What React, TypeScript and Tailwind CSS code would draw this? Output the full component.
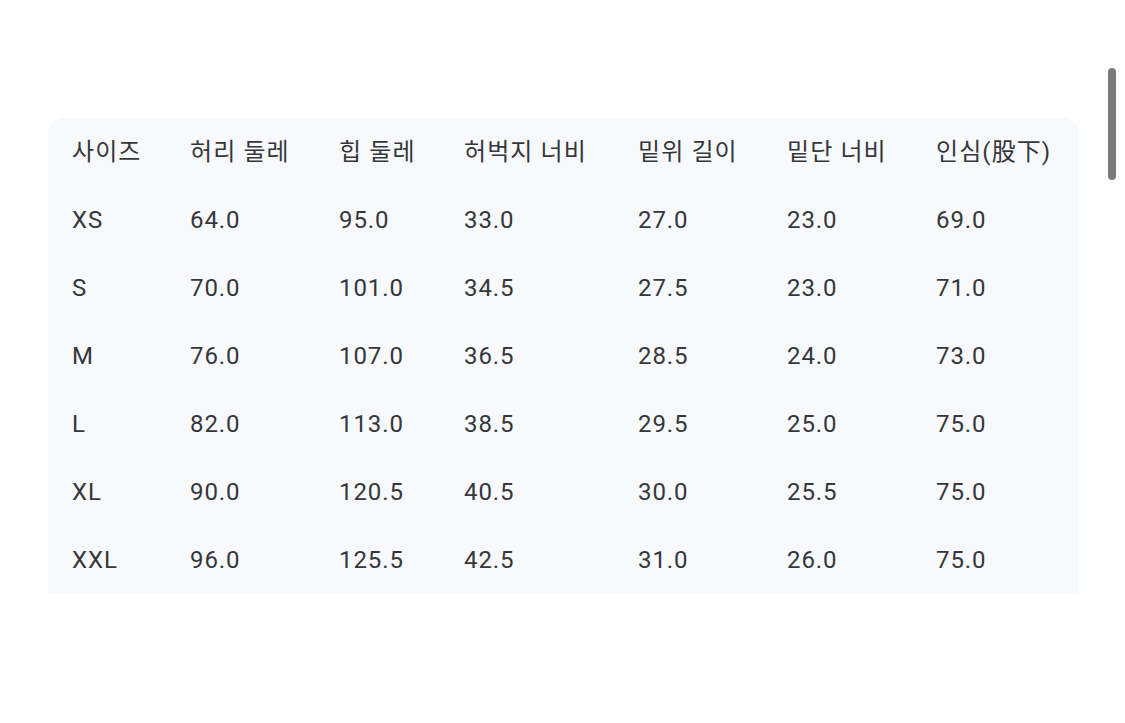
const HEADERS = ["사이즈", "허리 둘레", "힙 둘레", "허벅지 너비", "밑위 길이", "밑단 너비", "인심(股下)"];

const ROWS: string[][] = [
  ["XS", "64.0", "95.0", "33.0", "27.0", "23.0", "69.0"],
  ["S", "70.0", "101.0", "34.5", "27.5", "23.0", "71.0"],
  ["M", "76.0", "107.0", "36.5", "28.5", "24.0", "73.0"],
  ["L", "82.0", "113.0", "38.5", "29.5", "25.0", "75.0"],
  ["XL", "90.0", "120.5", "40.5", "30.0", "25.5", "75.0"],
  ["XXL", "96.0", "125.5", "42.5", "31.0", "26.0", "75.0"],
];

const gridCols = "grid grid-cols-[118px_149px_125px_174px_149px_149px_1fr]";

export default function App() {
  return (
    <div className="relative h-[723px] w-[1125px] overflow-hidden bg-white font-['Roboto','Noto_Sans_CJK_KR',sans-serif] text-[24px] text-[#35373a]">
      <div className="absolute right-[9px] top-[68px] h-[112px] w-[8px] rounded-full bg-[#7a7a7a]" />
      <div className="pl-[48px] pt-[118px]">
        <div className="w-[1031px] rounded-t-[16px] rounded-b-[3px] bg-[#f8f9fc]">
          <div className={`${gridCols} h-[68px] items-center pl-6`}>
            {HEADERS.map((h) => (
              <div key={h} className="whitespace-nowrap tracking-[1.1px]">{h}</div>
            ))}
          </div>
          {ROWS.map((row) => (
            <div key={row[0]} className={`${gridCols} h-[68px] items-center pl-6`}>
              {row.map((cell, i) => (
                <div key={i} className="tracking-[0.9px]">{cell}</div>
              ))}
            </div>
          ))}
        </div>
      </div>
    </div>
  );
}
